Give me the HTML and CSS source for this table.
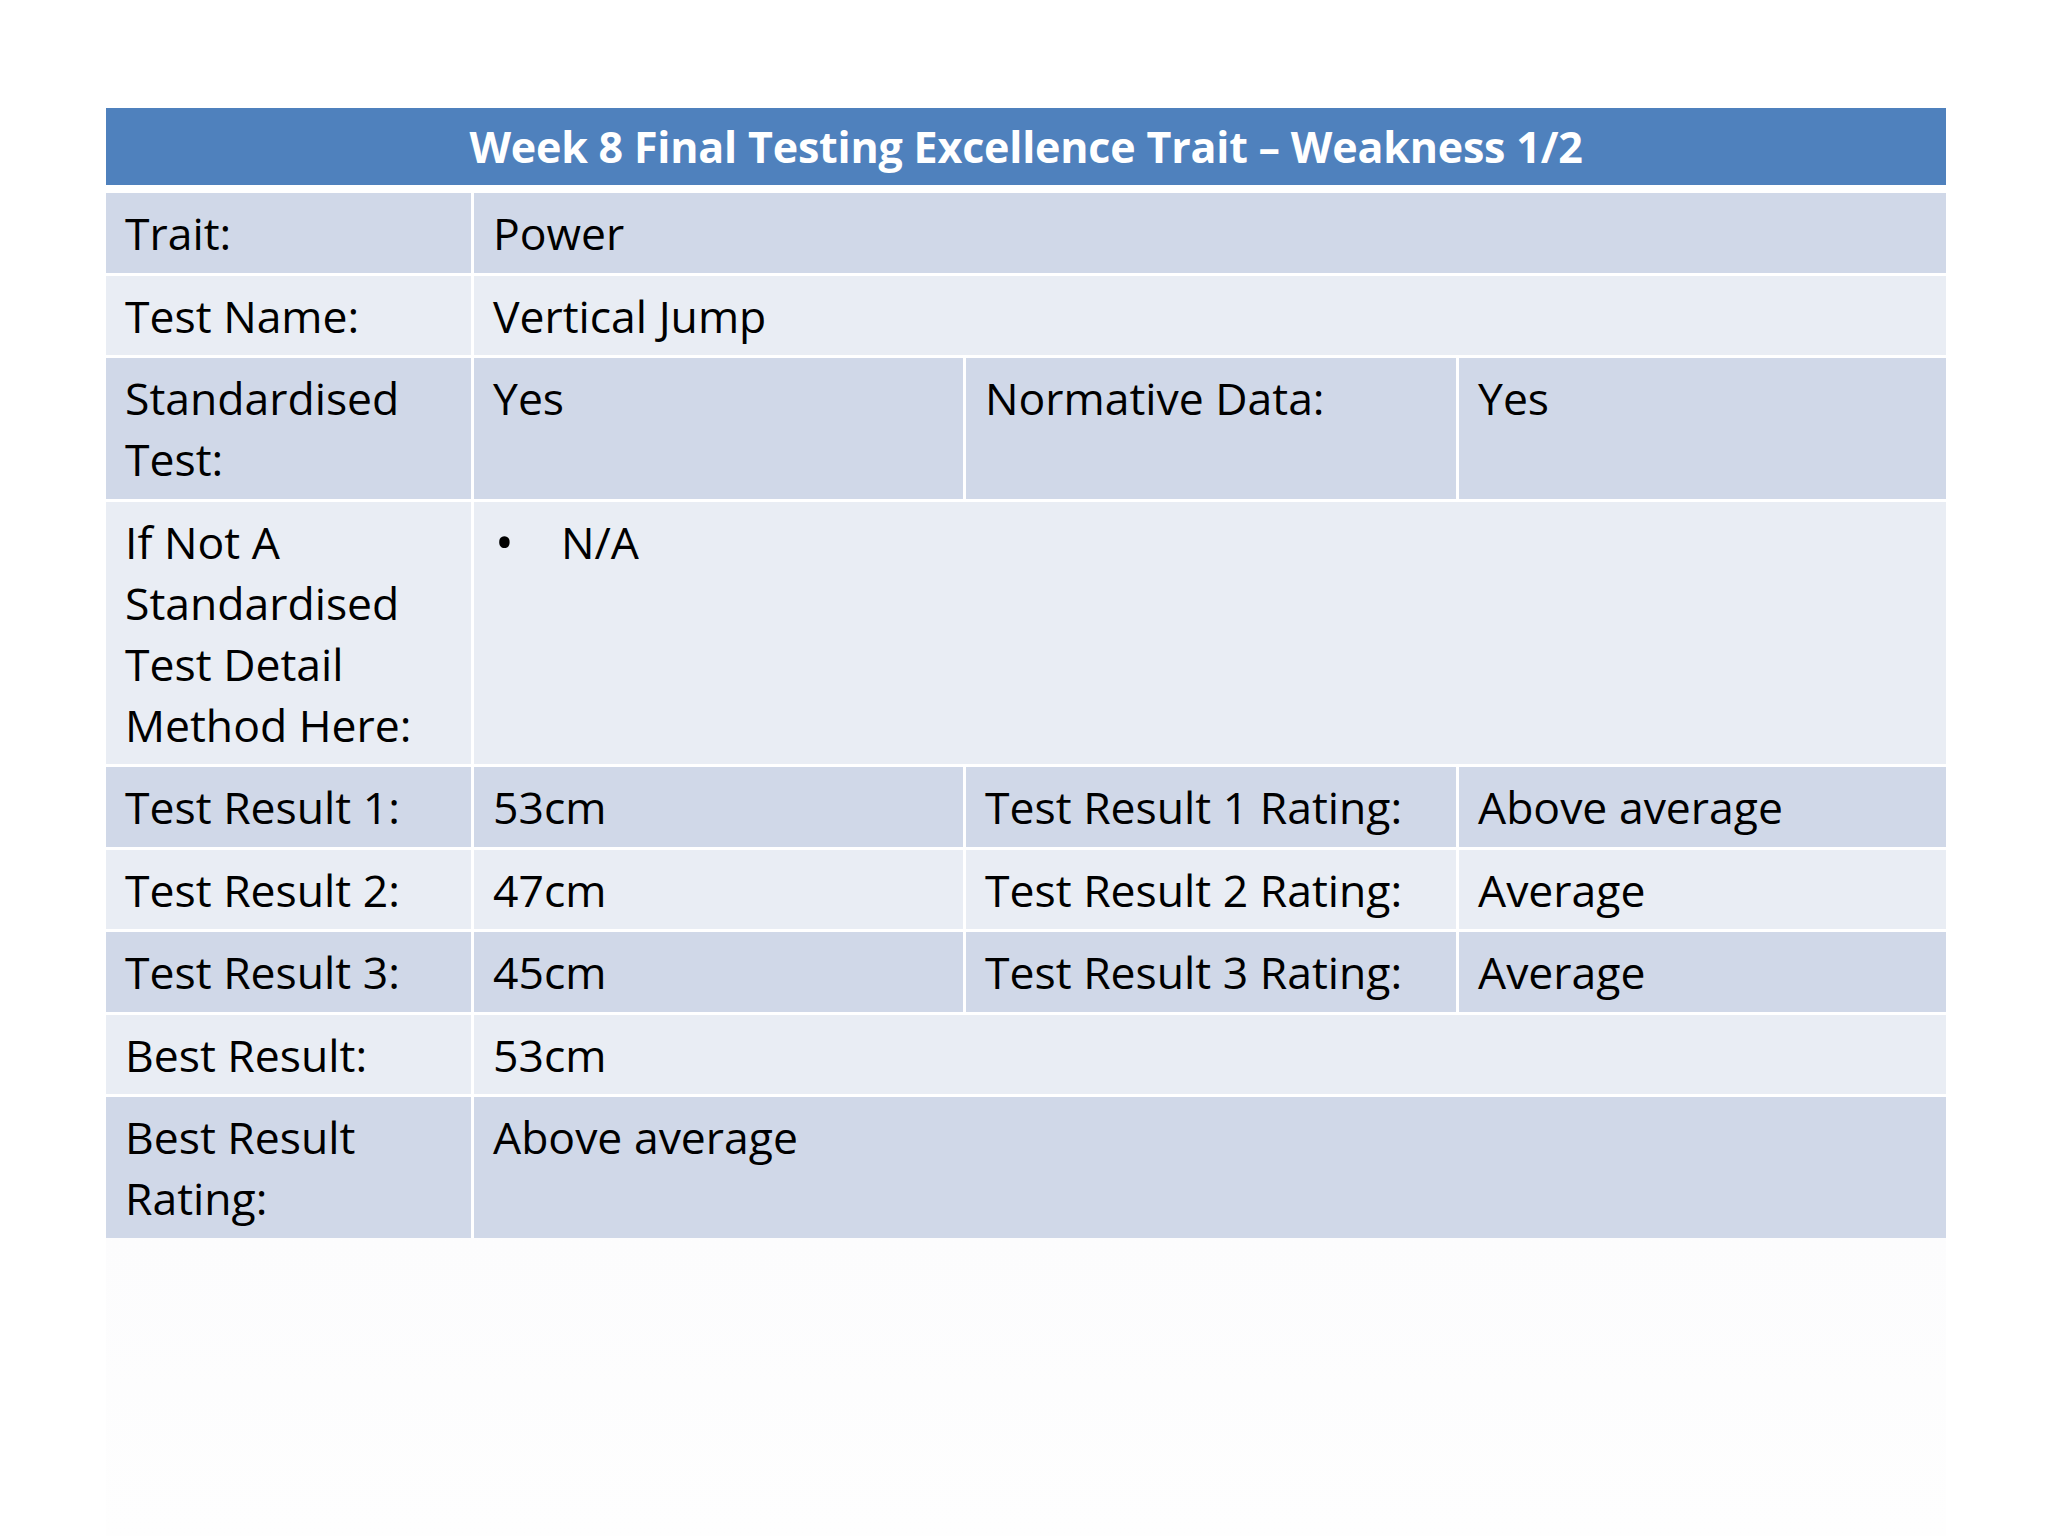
FILE: index.html
```html
<!DOCTYPE html>
<html lang="en">
<head>
<meta charset="utf-8">
<title>Week 8 Final Testing Excellence Trait – Weakness 1/2</title>
<link rel="stylesheet" href="styles.css">
</head>
<body>
<div class="slide">
  <div class="table">
    <div class="head">Week 8 Final Testing Excellence Trait – Weakness 1/2</div>

    <div class="cell odd">Trait:</div>
    <div class="cell odd span3">Power</div>

    <div class="cell even">Test Name:</div>
    <div class="cell even span3">Vertical Jump</div>

    <div class="cell odd">Standardised<br>Test:</div>
    <div class="cell odd">Yes</div>
    <div class="cell odd">Normative Data:</div>
    <div class="cell odd">Yes</div>

    <div class="cell even">If Not A<br>Standardised<br>Test Detail<br>Method Here:</div>
    <div class="cell even span3">
      <ul class="bullets"><li><span class="dot">•</span><span>N/A</span></li></ul>
    </div>

    <div class="cell odd">Test Result 1:</div>
    <div class="cell odd">53cm</div>
    <div class="cell odd">Test Result 1 Rating:</div>
    <div class="cell odd">Above average</div>

    <div class="cell even">Test Result 2:</div>
    <div class="cell even">47cm</div>
    <div class="cell even">Test Result 2 Rating:</div>
    <div class="cell even">Average</div>

    <div class="cell odd">Test Result 3:</div>
    <div class="cell odd">45cm</div>
    <div class="cell odd">Test Result 3 Rating:</div>
    <div class="cell odd">Average</div>

    <div class="cell even">Best Result:</div>
    <div class="cell even span3">53cm</div>

    <div class="cell odd">Best Result<br>Rating:</div>
    <div class="cell odd span3">Above average</div>
  </div>
  <div class="reflect"></div>
</div>
</body>
</html>
```
FILE: styles.css
```css
html, body {
  margin: 0;
  padding: 0;
  background: #ffffff;
}

body {
  font-family: "Open Sans", "Noto Sans", "Liberation Sans", sans-serif;
  color: #000000;
}

.slide {
  width: 2048px;
  height: 1536px;
  padding: 108px 0 0 106px;
  box-sizing: border-box;
  display: flex;
  flex-direction: column;
  overflow: hidden;
}

.table {
  width: 1840px;
  display: grid;
  grid-template-columns: 365px 489px 490px 1fr;
  column-gap: 3px;
  row-gap: 3px;
  background: #ffffff;
}

.head {
  grid-column: 1 / -1;
  height: 77px;
  margin-bottom: 5px;
  background: #4f81bd;
  color: #ffffff;
  font-weight: 700;
  font-size: 43px;
  letter-spacing: -0.2px;
  display: flex;
  align-items: center;
  justify-content: center;
}

.cell {
  font-size: 44.5px;
  line-height: 61px;
  padding: 9px 18px 9.5px 19px;
  white-space: nowrap;
}

.odd {
  background: #d0d8e8;
}

.even {
  background: #e9edf4;
}

.span3 {
  grid-column: 2 / -1;
}

.bullets {
  list-style: none;
  margin: 0;
  padding: 0;
}

.bullets li {
  display: flex;
}

.dot {
  width: 68px;
  padding-left: 2px;
  box-sizing: border-box;
  font-size: 50px;
}

.reflect {
  width: 1840px;
  flex: 1;
  background: linear-gradient(#fcfcfd, #fefefe);
}
```
